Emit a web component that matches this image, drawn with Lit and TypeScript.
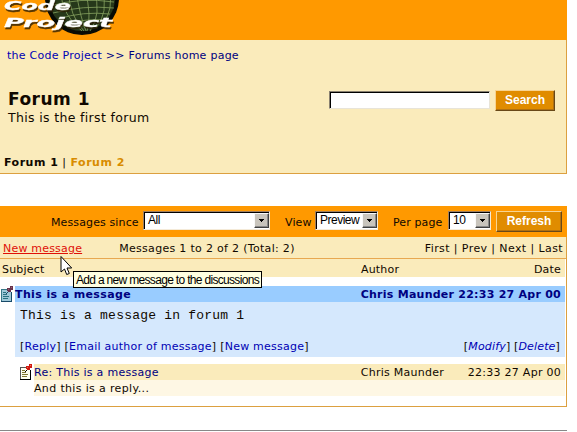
import { LitElement, html, css } from "lit";
import { customElement, property } from "lit/decorators.js";

@customElement("note-icon")
class NoteIcon extends LitElement {
  @property({ type: Boolean }) selected = false;

  static styles = css`
    :host { display: block; width: 13px; height: 16px; }
    svg { display: block; }
  `;

  render() {
    const s = this.selected;
    const paper = s ? "#9fc8d8" : "#fffff0";
    const edge = s ? "#387888" : "#555";
    const shade = s ? "#174968" : "#000";
    const pin = s ? "#68334c" : "#d01810";
    const glow = s ? "#9a6070" : "#f07050";
    return html`<svg width="13" height="16" viewBox="0 0 13 16" shape-rendering="crispEdges">
      <path d="M1 4h9v11H1z" fill=${paper}/>
      <path d="M0 3h7v1H1v11H0z" fill=${edge}/>
      <path d="M0 15h11v1H0zM10 6h1v9h-1z" fill=${shade}/>
      <path d="M2 6h3v1H2zM2 8h4v1H2zM2 10h6v1H2zM2 12h5v1H2z" fill=${s ? "#287080" : "#807830"}/>
      <path d="M9 0h3v4h-2v2H7V5H6V2h3z" fill=${pin}/>
      <path d="M10 1h1v1h-1zM7 3h1v1H7z" fill=${glow}/>
      <path d="M6 6h1v1H6zM5 7h1v1H5z" fill=${shade}/>
    </svg>`;
  }
}

@customElement("site-logo")
class SiteLogo extends LitElement {
  static styles = css`
    :host { display: block; width: 130px; height: 40px; }
    svg { display: block; }
    text { font: italic 700 13px "DejaVu Sans", sans-serif; fill: #fff; stroke: #fff; stroke-width: 0.3px; }
    .words { filter: drop-shadow(1.5px 2px 0.7px rgba(40, 28, 4, 0.8)); }
  `;

  render() {
    return html`<svg width="130" height="40" viewBox="0 0 130 40">
      <circle cx="82" cy="-2" r="37" fill="#080b04"/>
      <circle cx="82" cy="-2" r="33" fill="#26381a"/>
      <g fill="none" stroke="#86a260" stroke-width=".8">
        <path d="M60-10Q63 17 82 31M68-10Q70 17 84 31M76-10Q80 17 86 31M85-10Q92 16 87 31M94-10Q102 14 90 31M102-10Q109 12 96 28M109-10Q114 9 103 23"/>
        <path d="M50 1Q78-8 112-5M50 6Q80-3 114 2M53 13Q83 5 114 8M58 19Q83 11 110 14M64 25Q85 18 106 20M71 28Q85 24 98 26"/>
      </g>
      <g class="words">
        <text x="4" y="9.5" textLength="67" lengthAdjust="spacingAndGlyphs">Code</text>
        <text x="4" y="27" textLength="108" lengthAdjust="spacingAndGlyphs">Project</text>
      </g>
    </svg>`;
  }
}

@customElement("drop-list")
class DropList extends LitElement {
  @property() value = "";

  static styles = css`
    :host {
      display: flex; box-sizing: border-box; height: 19px; background: #fff;
      border: 1px solid; border-color: #a08060 #f4ead8 #f4ead8 #a08060;
      box-shadow: inset 1px 1px #000;
      font: 12px/17px "Liberation Sans", sans-serif; color: #000; letter-spacing: -0.5px;
    }
    .value { flex: 1; padding-left: 4px; }
    .arrow {
      box-sizing: border-box; width: 15px; height: 15px; margin: 1px 0 0; background: #c8c4bc;
      border: 1px solid; border-color: #f8f8f8 #404040 #404040 #f8f8f8;
      box-shadow: inset -1px -1px #888;
      display: grid; place-items: center;
    }
  `;

  render() {
    return html`<span class="value">${this.value}</span>
      <span class="arrow"><svg width="5" height="3" shape-rendering="crispEdges"><path d="M0 0h5v1H4v1H3v1H2V2H1V1H0z"/></svg></span>`;
  }
}

@customElement("app-root")
class AppRoot extends LitElement {
  static styles = css`
    :host {
      display: block; position: relative; width: 577px; height: 432px; overflow: hidden;
      background: #fff; color: #100800; white-space: nowrap;
      font: 11px/18px "DejaVu Sans", Verdana, sans-serif;
    }
    span, b { white-space: pre; }
    .row { display: flex; box-sizing: border-box; }
    .gap { flex: 1; }
    .bold { font-weight: 700; }
    .navy { color: #000080; }
    .link { color: #0000b4; }
    .banner { width: 567px; height: 40px; background: #ff9900; }
    .intro {
      box-sizing: border-box; width: 567px; height: 134px; background: #faebbb;
      border: solid #dca040; border-width: 0 1px 1px 0; padding-top: 7px;
    }
    .crumbs { padding-left: 7px; letter-spacing: 0.26px; }
    .title-row { margin-top: 23px; height: 40px; padding-left: 8px; }
    h1 { margin: 2px 0 0; font-size: 17px; line-height: 18px; letter-spacing: 0.5px; }
    .lead { font-size: 12.5px; line-height: 18px; letter-spacing: 0.34px; padding-top: 1px; }
    .search { margin: 3px 5px 0 0; box-sizing: border-box; width: 161px; height: 18px; background: #fff;
      border: 1px solid; border-color: #888070 #e8e4d8 #e8e4d8 #888070; box-shadow: inset 1px 1px #000; }
    .button {
      box-sizing: border-box; background: #e08c00; color: #fff; border: 1px solid;
      border-color: #f8d490 #684818 #684818 #f8d490; box-shadow: inset -1px -1px #b07010;
      font: 700 12px/18px "Liberation Sans", sans-serif; text-align: center;
    }
    .go { width: 60px; height: 21px; margin: 2px 11px 0 0; }
    .tabs { margin-top: 26px; padding-left: 4px; letter-spacing: 0.5px; }
    .other { color: #d88c00; }
    .board {
      box-sizing: border-box; width: 567px; height: 201px; margin-top: 32px;
      border: solid #dca040; border-width: 0 1px 1px 0;
    }
    .filters { width: 567px; height: 31px; background: #ff9900; padding: 5px 5px 0 51px; }
    .filters .label { padding-top: 3px; letter-spacing: 0.12px; width: 88px; }
    .filters .l-view { width: 26px; }
    .filters .l-per { width: 51px; }
    .since { width: 127px; margin: 0 15px 0 4px; }
    .view { width: 63px; margin: 0 15px 0 4px; }
    .per { width: 43px; margin: 0 5px 0 4px; }
    .refresh { width: 66px; height: 21px; }
    .pager { height: 22px; background: #faebbb; border-bottom: 1px solid #e8a850; padding: 3px 3px 0 3px; }
    .new { color: #e01008; text-decoration: underline; letter-spacing: 0.2px; margin-right: 37px; }
    .count { letter-spacing: 0.31px; }
    .pages { letter-spacing: 0.4px; }
    .heads { height: 18px; width: 565px; background: #faebbb; padding: 2px 4px 0 2px; letter-spacing: 0.2px; }
    .author { width: 173px; }
    .post { height: 16px; margin-top: 9px; width: 565px; }
    .post note-icon { margin-left: 1px; width: 14px; }
    .bar { flex: 1; height: 16px; display: flex; background: #99ccff; padding-right: 4px; }
    .subject { letter-spacing: 0.38px; }
    .who, .when { letter-spacing: 0.25px; }
    .body { box-sizing: border-box; margin-left: 15px; width: 550px; height: 55px; background: #d5e8fd; padding: 6px 5px 0; }
    .body p { margin: 0; font: 13px/16px "Liberation Mono", monospace; letter-spacing: 0.21px; }
    .body .row { margin-top: 14px; }
    .actions { letter-spacing: 0.24px; }
    .edits { letter-spacing: 0.16px; }
    .reply { height: 16px; margin-top: 7px; width: 565px; }
    .reply note-icon { margin-left: 20px; width: 14px; }
    .reply .bar { background: #faebbb; letter-spacing: 0.27px; }
    .text { margin-left: 34px; width: 531px; height: 16px; background: #fef7e4; letter-spacing: 0.35px; }
    .who2 { width: 107px; }
    .rule { width: 567px; height: 1px; background: #888; margin-top: 23px; }
    .tip {
      position: absolute; left: 73px; top: 271px; box-sizing: border-box; width: 189px; height: 17px;
      border: 1px solid #000; background: #ffffe1; padding-left: 2px;
      font: 12px/17px "Liberation Sans", sans-serif; letter-spacing: -0.68px; color: #000;
    }
    .pointer { position: absolute; left: 60px; top: 256px; }
  `;

  render() {
    return html`<div class="banner"><site-logo></site-logo></div>
      <section class="intro">
        <div class="row crumbs"><span class="link">the Code Project</span><span class="navy"> &gt;&gt; Forums home page</span></div>
        <div class="row title-row"><div><h1>Forum 1</h1><div class="lead">This is the first forum</div></div><span class="gap"></span><span class="search"></span><span class="button go">Search</span></div>
        <div class="row tabs"><b>Forum 1</b><span> | </span><b class="other">Forum 2</b></div>
      </section>
      <section class="board">
        <div class="row filters"><span class="label">Messages since</span><drop-list class="since" value="All"></drop-list><span class="label l-view">View</span><drop-list class="view" value="Preview"></drop-list><span class="label l-per">Per page</span><drop-list class="per" value="10"></drop-list><span class="button refresh">Refresh</span></div>
        <div class="row pager"><span class="new">New message</span><span class="count">Messages 1 to 2 of 2 (Total: 2)</span><span class="gap"></span><span class="pages">First | Prev | Next | Last</span></div>
        <div class="row heads"><span>Subject</span><span class="gap"></span><span class="author">Author</span><span>Date</span></div>
        <div class="row post"><note-icon selected></note-icon><div class="bar bold navy"><span class="subject">This is a message</span><span class="gap"></span><span class="who">Chris Maunder</span><span class="when"> 22:33 27 Apr 00</span></div></div>
        <div class="body"><p>This is a message in forum 1</p><div class="row"><span class="actions">[<span class="link">Reply</span>] [<span class="link">Email author of message</span>] [<span class="link">New message</span>]</span><span class="gap"></span><span class="edits">[<i class="link">Modify</i>] [<i class="link">Delete</i>]</span></div></div>
        <div class="row reply"><note-icon></note-icon><div class="bar"><span class="navy">Re: This is a message</span><span class="gap"></span><span class="who2">Chris Maunder</span><span>22:33 27 Apr 00</span></div></div>
        <div class="text">And this is a reply...</div>
      </section>
      <div class="rule"></div>
      <div class="tip">Add a new message to the discussions</div>
      <svg class="pointer" width="13" height="20"><path d="M1 .5V16l3.5-3 2.2 5.5 2.6-1L7 12h4.7z" fill="#fff" stroke="#000"/></svg>`;
  }
}
